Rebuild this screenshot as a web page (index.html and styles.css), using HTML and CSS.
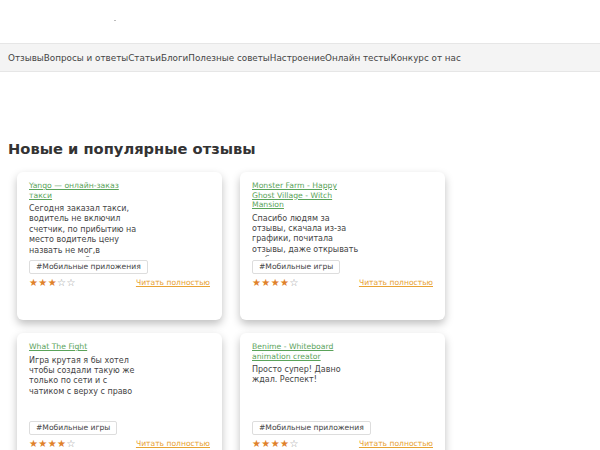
FILE: index.html
```html
<!DOCTYPE html>
<html lang="ru">
<head>
<meta charset="utf-8">
<link rel="stylesheet" href="styles.css">
</head>
<body>
<header class="top">
  <span class="logo-dot"></span>
</header>
<nav class="menu">
  <a>Отзывы</a><a>Вопросы и ответы</a><a>Статьи</a><a>Блоги</a><a>Полезные советы</a><a>Настроение</a><a>Онлайн тесты</a><a>Конкурс от нас</a>
</nav>
<main class="content">
  <h1 class="title">Новые и популярные отзывы</h1>
  <div class="grid">
    <article class="card">
      <a class="card-title">Yango — онлайн-заказ такси</a>
      <p class="card-text">Сегодня заказал такси, водитель не включил счетчик, по прибытию на место водитель цену назвать не мог,в приложении было</p>
      <div class="card-foot">
        <span class="tag">#Мобильные приложения</span>
        <div class="row">
          <span class="stars"><b>★★★</b><i>☆☆</i></span>
          <a class="more">Читать полностью</a>
        </div>
      </div>
    </article>
    <article class="card">
      <a class="card-title">Monster Farm - Happy Ghost Village - Witch Mansion</a>
      <p class="card-text">Спасибо людям за отзывы, скачала из-за графики, почитала отзывы, даже открывать не буду</p>
      <div class="card-foot">
        <span class="tag">#Мобильные игры</span>
        <div class="row">
          <span class="stars"><b>★★★★</b><i>☆</i></span>
          <a class="more">Читать полностью</a>
        </div>
      </div>
    </article>
    <article class="card">
      <a class="card-title">What The Fight</a>
      <p class="card-text">Игра крутая я бы хотел чтобы создали такую же только по сети и с чатиком с верху с право</p>
      <div class="card-foot">
        <span class="tag">#Мобильные игры</span>
        <div class="row">
          <span class="stars"><b>★★★★</b><i>☆</i></span>
          <a class="more">Читать полностью</a>
        </div>
      </div>
    </article>
    <article class="card">
      <a class="card-title">Benime - Whiteboard animation creator</a>
      <p class="card-text">Просто супер! Давно ждал. Респект!</p>
      <div class="card-foot">
        <span class="tag">#Мобильные приложения</span>
        <div class="row">
          <span class="stars"><b>★★★★</b><i>☆</i></span>
          <a class="more">Читать полностью</a>
        </div>
      </div>
    </article>
  </div>
</main>
</body>
</html>
```
FILE: styles.css
```css
* { box-sizing: border-box; }
html, body { margin: 0; padding: 0; background: #fff; }
body {
  font-family: "DejaVu Sans", sans-serif;
  color: #444;
  height: 450px;
  overflow: hidden;
}
.top {
  height: 43px;
  position: relative;
}
.logo-dot {
  position: absolute;
  left: 114px;
  top: 20px;
  width: 2px;
  height: 1px;
  background: #bbb;
}
.menu {
  display: flex;
  height: 29px;
  align-items: center;
  padding: 0 8px;
  background: #f4f4f4;
  border-top: 1px solid #e6e6e6;
  border-bottom: 1px solid #e6e6e6;
  font-size: 8.8px;
}
.menu a { color: #444; text-decoration: none; }
.content { padding: 0 8px; }
.title {
  margin: 67px 0 13px;
  font-size: 14.7px;
  font-weight: bold;
  color: #333;
  line-height: 20px;
}
.grid {
  display: grid;
  grid-template-columns: 205px 205px;
  column-gap: 18px;
  row-gap: 13px;
  margin-left: 9px;
}
.card {
  height: 148px;
  padding: 9px 12px 12px;
  background: #fff;
  border-radius: 6px;
  box-shadow: 0 4px 8px rgba(0,0,0,0.25);
  display: flex;
  flex-direction: column;
}
.card-title {
  display: block;
  flex: none;
  width: 100px;
  font-size: 7.7px;
  line-height: 9.5px;
  color: #5aa35a;
  text-decoration: underline;
}
.card-text {
  flex: 0 1 auto;
  min-height: 0;
  margin: 4px 0 0;
  width: 108px;
  overflow: hidden;
  font-size: 8px;
  line-height: 10.4px;
  color: #444;
}
.card-foot {
  flex: none;
  margin-top: auto;
  padding-top: 3px;
  padding-bottom: 20px;
  display: flex;
  flex-direction: column;
  align-items: flex-start;
}
.tag {
  display: inline-block;
  padding: 2px 6px;
  border: 1px solid #ddd;
  border-radius: 2px;
  font-size: 7.6px;
  line-height: 8px;
  color: #444;
}
.row {
  align-self: stretch;
  display: flex;
  justify-content: space-between;
  align-items: center;
  margin-top: 3px;
}
.stars { font-size: 10px; letter-spacing: 0.4px; line-height: 11px; }
.stars b { color: #e0812a; font-weight: normal; }
.stars i { color: #999; font-style: normal; }
.more {
  font-size: 7.6px;
  color: #e8a233;
  text-decoration: underline;
}
```
